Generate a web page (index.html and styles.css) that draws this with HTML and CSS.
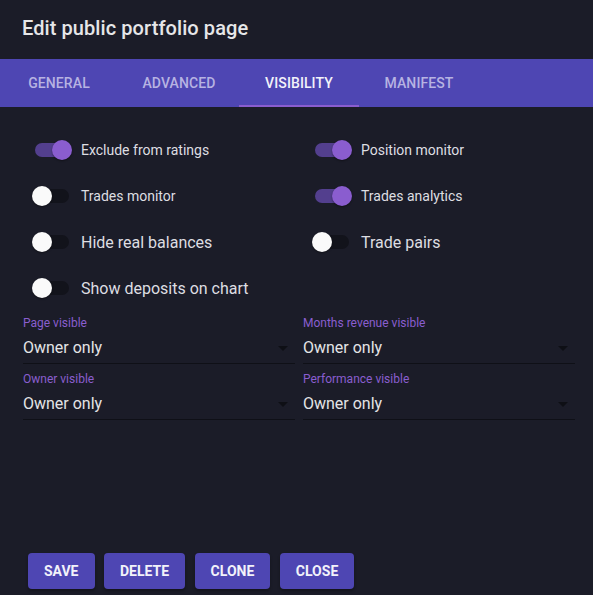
FILE: index.html
```html
<!DOCTYPE html>
<html lang="en">
<head>
<meta charset="utf-8">
<title>Edit public portfolio page</title>
<link rel="stylesheet" href="styles.css">
</head>
<body>
<div class="dialog">
  <h2 class="title">Edit public portfolio page</h2>
  <nav class="tabs">
    <div class="tab">General</div>
    <div class="tab">Advanced</div>
    <div class="tab active">Visibility</div>
    <div class="tab">Manifest</div>
  </nav>
  <div class="content">
    <div class="switches">
      <label class="row small"><span class="switch on"><span class="track"></span><span class="thumb"></span></span><span class="text">Exclude from ratings</span></label>
      <label class="row small"><span class="switch on"><span class="track"></span><span class="thumb"></span></span><span class="text">Position monitor</span></label>
      <label class="row small"><span class="switch"><span class="track"></span><span class="thumb"></span></span><span class="text">Trades monitor</span></label>
      <label class="row small"><span class="switch on"><span class="track"></span><span class="thumb"></span></span><span class="text">Trades analytics</span></label>
      <label class="row"><span class="switch"><span class="track"></span><span class="thumb"></span></span><span class="text">Hide real balances</span></label>
      <label class="row"><span class="switch"><span class="track"></span><span class="thumb"></span></span><span class="text">Trade pairs</span></label>
      <label class="row"><span class="switch"><span class="track"></span><span class="thumb"></span></span><span class="text">Show deposits on chart</span></label>
    </div>
    <div class="fields">
      <div class="field"><div class="flabel">Page visible</div><div class="select"><span>Owner only</span><span class="arrow"></span></div></div>
      <div class="field"><div class="flabel">Months revenue visible</div><div class="select"><span>Owner only</span><span class="arrow"></span></div></div>
      <div class="field"><div class="flabel">Owner visible</div><div class="select"><span>Owner only</span><span class="arrow"></span></div></div>
      <div class="field"><div class="flabel">Performance visible</div><div class="select"><span>Owner only</span><span class="arrow"></span></div></div>
    </div>
  </div>
  <div class="actions">
    <button class="btn">Save</button>
    <button class="btn">Delete</button>
    <button class="btn">Clone</button>
    <button class="btn">Close</button>
  </div>
</div>
</body>
</html>
```

FILE: styles.css
```css
* { box-sizing: border-box; }
html, body { margin: 0; padding: 0; }
body {
  background: #1b1c28;
  font-family: Roboto, "Liberation Sans", Arial, sans-serif;
  color: #e2e2e4;
}
.dialog {
  height: 595px;
  display: flex;
  flex-direction: column;
}
.title {
  margin: 0;
  padding: 12px 22px 15px;
  font-size: 20px;
  line-height: 32px;
  font-weight: 500;
  color: #e6e6e8;
  letter-spacing: 0.08px;
}
.tabs {
  display: flex;
  height: 48px;
  background: #4e46b3;
  padding-left: 0;
}
.tab {
  width: 120px;
  display: flex;
  align-items: center;
  justify-content: center;
  font-size: 14px;
  font-weight: 500;
  text-transform: uppercase;
  color: #b7b3e2;
  letter-spacing: 0.1px;
}
.tab:first-child { margin-left: -1px; }
.tab.active {
  color: #f2f2fa;
  box-shadow: inset 0 -2px 0 #8a5dcf;
}
.content {
  flex: 1;
  padding: 24px 18px 0 23px;
}
.switches {
  display: grid;
  grid-template-columns: 280px 272px;
  row-gap: 8px;
}
.row {
  display: flex;
  align-items: center;
  height: 38px;
  font-size: 16px;
}
.row.small { font-size: 14px; }
.switch {
  position: relative;
  width: 58px;
  height: 38px;
  flex: none;
}
.track {
  position: absolute;
  left: 12px;
  top: 12px;
  width: 34px;
  height: 14px;
  border-radius: 7px;
  background: #12131b;
}
.thumb {
  position: absolute;
  left: 9px;
  top: 9px;
  width: 20px;
  height: 20px;
  border-radius: 50%;
  background: #fafafa;
  box-shadow: 0 1px 2px rgba(0,0,0,0.4);
}
.switch.on .track { background: #533f8e; }
.switch.on .thumb { left: 29px; background: #8a5dcf; }
.text { color: #dedee2; }
.fields {
  margin-top: 8px;
  display: grid;
  grid-template-columns: 272px 272px;
  column-gap: 8px;
}
.field { margin-bottom: 7px; }
.flabel {
  font-size: 12px;
  line-height: 16px;
  color: #8a5ecf;
}
.select {
  display: flex;
  align-items: center;
  justify-content: space-between;
  padding: 5px 0 3px;
  font-size: 16px;
  line-height: 24px;
  color: #e4e4e6;
  border-bottom: 1px solid rgba(0,0,0,0.42);
}
.arrow {
  width: 0;
  height: 0;
  margin-right: 7px;
  border-left: 5px solid transparent;
  border-right: 5px solid transparent;
  border-top: 5px solid #0e0f15;
}
.actions {
  display: flex;
  gap: 9.5px;
  padding: 0 0 6px 28px;
}
.btn {
  height: 36px;
  padding: 0 16px;
  min-width: 64px;
  border: none;
  border-radius: 4px;
  background: #4e46b3;
  color: #f2f2fa;
  font-family: Roboto, "Liberation Sans", Arial, sans-serif;
  font-size: 14px;
  font-weight: 700;
  text-transform: uppercase;
  box-shadow: 0 2px 3px rgba(0,0,0,0.3);
}
```
